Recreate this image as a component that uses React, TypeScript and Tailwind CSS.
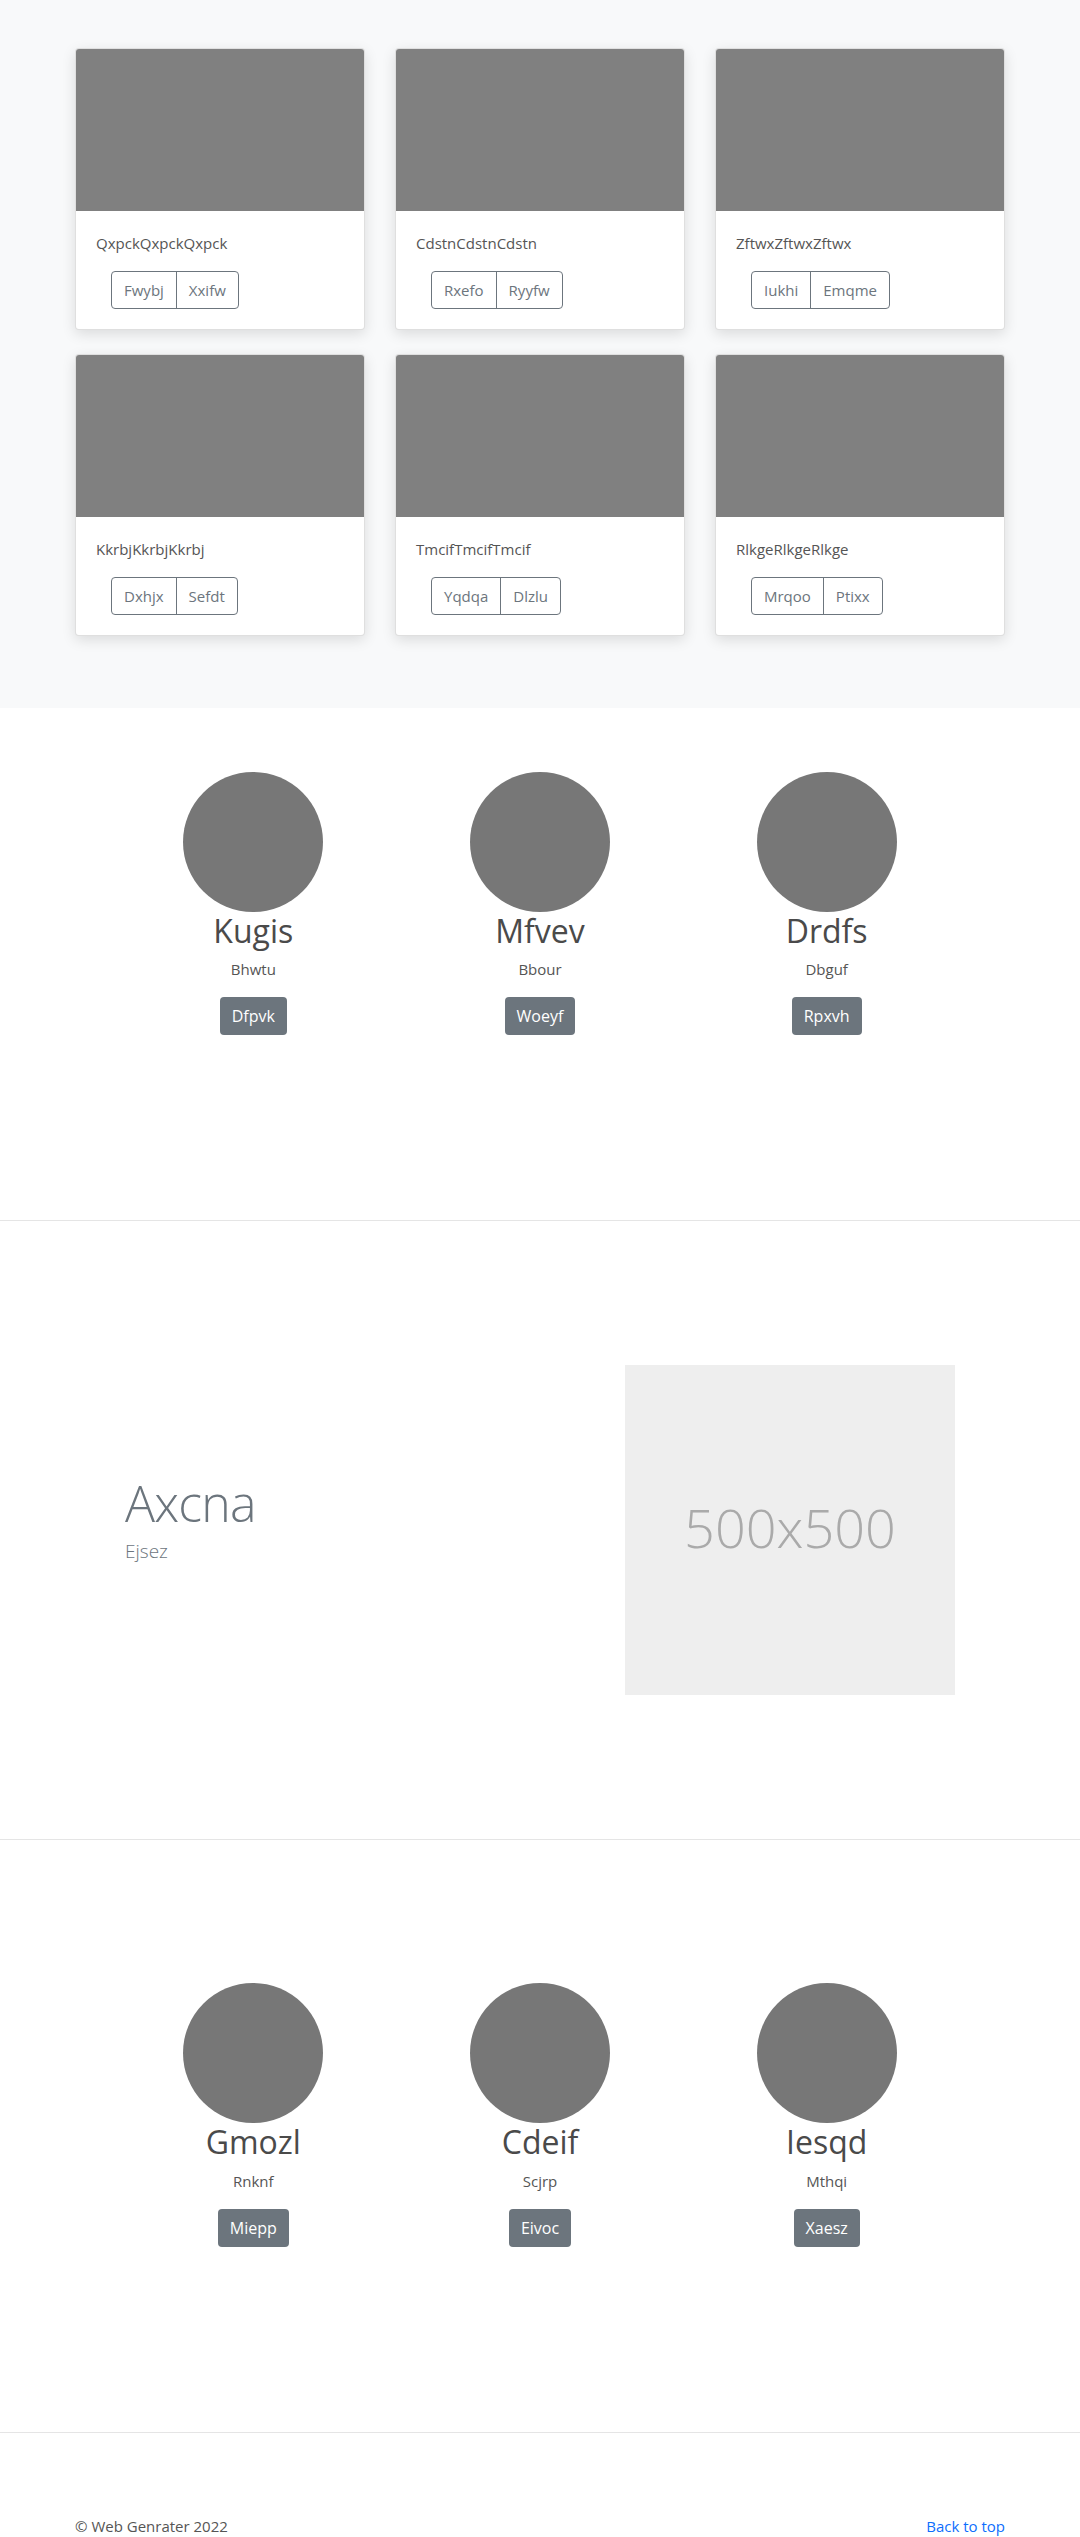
const cards = [
  { title: "QxpckQxpckQxpck", a: "Fwybj", b: "Xxifw" },
  { title: "CdstnCdstnCdstn", a: "Rxefo", b: "Ryyfw" },
  { title: "ZftwxZftwxZftwx", a: "Iukhi", b: "Emqme" },
  { title: "KkrbjKkrbjKkrbj", a: "Dxhjx", b: "Sefdt" },
  { title: "TmcifTmcifTmcif", a: "Yqdqa", b: "Dlzlu" },
  { title: "RlkgeRlkgeRlkge", a: "Mrqoo", b: "Ptixx" },
];

const teamA = [
  { name: "Kugis", role: "Bhwtu", btn: "Dfpvk" },
  { name: "Mfvev", role: "Bbour", btn: "Woeyf" },
  { name: "Drdfs", role: "Dbguf", btn: "Rpxvh" },
];

const teamB = [
  { name: "Gmozl", role: "Rnknf", btn: "Miepp" },
  { name: "Cdeif", role: "Scjrp", btn: "Eivoc" },
  { name: "Iesqd", role: "Mthqi", btn: "Xaesz" },
];

type Person = { name: string; role: string; btn: string };

function People({ items }: { items: Person[] }) {
  return (
    <div className="mx-auto grid w-[860px] grid-cols-3">
      {items.map((p) => (
        <div key={p.name} className="flex flex-col items-center">
          <div className="h-[140px] w-[140px] rounded-full bg-[#777777]" />
          <h2 className="mb-[7px] text-[32px] leading-[1.2] text-[#4a4a4a]">{p.name}</h2>
          <p className="mb-4 text-[15px] leading-6 text-[#555555]">{p.role}</p>
          <a className="flex h-[38px] items-center rounded bg-[#6c757d] px-3 text-[16px] text-white">
            {p.btn}
          </a>
        </div>
      ))}
    </div>
  );
}

export default function App() {
  return (
    <main className="min-h-screen bg-white font-['Open_Sans',sans-serif] text-[#555555]">
      {/* album */}
      <section className="bg-[#f8f9fa] pt-12 pb-[72px]">
        <div className="mx-auto grid w-[930px] grid-cols-3 gap-x-[30px] gap-y-6">
          {cards.map((c) => (
            <div
              key={c.title}
              className="overflow-hidden rounded border border-black/[0.125] bg-white shadow-[0_4px_14px_rgba(0,0,0,0.12)]"
            >
              <div className="h-[162px] bg-[#808080]" />
              <div className="p-5">
                <p className="mb-4 text-[15px] leading-6 text-[#555555]">{c.title}</p>
                <div className="ml-[15px] inline-flex h-[38px] rounded border border-[#6c757d] text-[15px] text-[#6c757d]">
                  <span className="flex items-center px-3">{c.a}</span>
                  <span className="flex items-center border-l border-[#6c757d] px-3">{c.b}</span>
                </div>
              </div>
            </div>
          ))}
        </div>
      </section>

      {/* team */}
      <section className="pt-16 pb-[185px]">
        <People items={teamA} />
      </section>

      {/* featurette */}
      <section className="border-t border-[#e5e5e5] py-[144px]">
        <div className="mx-auto flex w-[830px] items-center justify-between">
          <div>
            <h2 className="mb-2 text-[50px] font-light leading-none tracking-[-0.8px] text-[#6c757d]">
              Axcna
            </h2>
            <p className="mb-4 text-[19px] font-light leading-[30px] text-[#6c757d]">Ejsez</p>
          </div>
          <div className="flex h-[330px] w-[330px] items-center justify-center bg-[#eeeeee]">
            <span className="mb-[6px] text-[54px] font-light leading-none text-[#aaaaaa]">500x500</span>
          </div>
        </div>
      </section>

      {/* team 2 */}
      <section className="border-t border-[#e5e5e5] pt-[143px] pb-[185px]">
        <People items={teamB} />
      </section>

      <footer className="border-t border-[#e5e5e5] pt-[81px] pb-12">
        <div className="mx-auto flex w-[930px] justify-between text-[15px] leading-6">
          <p className="text-[#555555]">© Web Genrater 2022</p>
          <a className="text-[#0d6efd]">Back to top</a>
        </div>
      </footer>
    </main>
  );
}
